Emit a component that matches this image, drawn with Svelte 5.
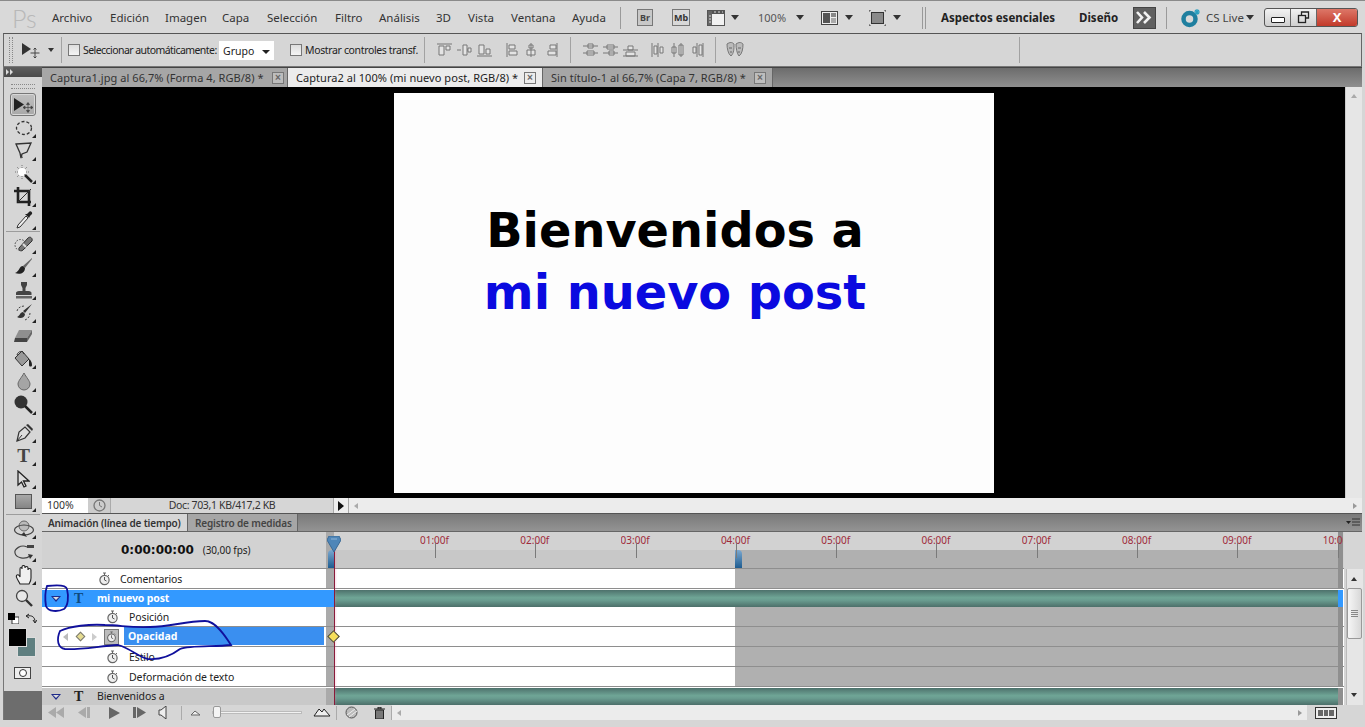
<script>
  const menus = [
    ['Archivo', 58], ['Edición', 55], ['Imagen', 57], ['Capa', 45], ['Selección', 68],
    ['Filtro', 44], ['Análisis', 57], ['3D', 32], ['Vista', 43], ['Ventana', 61], ['Ayuda', 48]
  ];
  const ticks = ['01:00f','02:00f','03:00f','04:00f','05:00f','06:00f','07:00f','08:00f','09:00f','10:00f'];
  const alignA = [
    'M0 1h15M2 3h5v9H2zM9 3h4v4H9z', 'M0 7h4M6 2h4v10H6zM11 5h3v4h-3zM10 7h1', 'M0 13h15M2 2h5v9H2zM9 6h4v5H9z'
  ];
  const alignB = [
    'M1 0v14M3 2h6v4H3zM3 8h8v4H3z', 'M5 0v14M3 2h4v3H3zM1 7h8v5H1z', 'M11 0v14M4 2h6v4H4zM2 8h8v4H2z'
  ];
  const alignC = [
    'M0 3h15M0 10h15M5 1h5v4H5zM4 8h7v4H4z', 'M0 4h15M0 10h15M4 2h7v4H4zM6 8h5v4H6z', 'M0 13h15M0 7h15M5 3h5v4H5zM3 9h9v4H3z'
  ];
  const alignD = [
    'M1 0v14M7 0v14M3 3h3v8H3zM9 4h3v6H9z', 'M3 0v14M10 0v14M1 4h4v6H1zM8 2h4v10H8z', 'M6 0v14M12 0v14M2 4h3v6H2zM8 2h3v10H8z'
  ];
</script>

{#snippet down(cls = '')}
  <span class="tri {cls}"></span>
{/snippet}

{#snippet watch()}
  <svg class="watch" width="13" height="14" viewBox="0 0 13 14"><path d="M5 1h3M6.500 1v2M10 3l1 1" stroke="#666" fill="none"/><circle cx="6.500" cy="8" r="4.600" fill="#eee" stroke="#666" stroke-width="1.200"/><path d="M6.500 8V5M6.500 8l2 1" stroke="#555" fill="none"/></svg>
{/snippet}

{#snippet layerT(dark)}
  <span class="layer-t" class:dark>T</span>
{/snippet}

<div class="app">
  <header class="title">
    <span class="ps">Ps</span>
    <nav class="menus">
      {#each menus as [m, w]}
        <span class="menu" style:width="{w}px">{m}</span>
      {/each}
    </nav>
    <span class="vsep"></span>
    <span class="badge br">Br</span>
    <span class="badge mb">Mb</span>
    <svg class="ic-film" width="18" height="16" viewBox="0 0 18 16"><rect x="0.500" y="0.500" width="17" height="15" fill="#f2f2f2" stroke="#555"/><rect x="1" y="1" width="16" height="3" fill="#555"/><rect x="1" y="1" width="4" height="14" fill="#666"/><path d="M2 6h2M2 9h2M2 12h2M7 2h2M11 2h2M15 2h1" stroke="#ddd"/></svg>
    {@render down('t1')}
    <span class="zoom">100%</span>
    {@render down('t2')}
    <svg class="ic-arr" width="17" height="14" viewBox="0 0 17 14"><rect x="0.500" y="0.500" width="16" height="13" fill="#eee" stroke="#444"/><rect x="2" y="2" width="7" height="10" fill="#555"/><rect x="10" y="2" width="5" height="4" fill="#888"/><rect x="10" y="7" width="5" height="5" fill="#aaa"/></svg>
    {@render down('t3')}
    <svg class="ic-scr" width="17" height="16" viewBox="0 0 17 16"><path d="M0 2V0h2M15 0h2v2M17 14v2h-2M2 16H0v-2" stroke="#444" fill="none"/><rect x="2.500" y="2.500" width="12" height="11" fill="#8a8a8a" stroke="#333"/></svg>
    {@render down('t4')}
    <span class="dsep"></span>
    <b class="ws ws1">Aspectos esenciales</b>
    <b class="ws ws2">Diseño</b>
    <span class="more"><svg width="17" height="13" viewBox="0 0 17 13"><path d="M1 1l5 5.500-5 5.500M8 1l5.500 5.500L8 12" fill="none" stroke="#f2f2f2" stroke-width="2.600"/></svg></span>
    <span class="vsep s2"></span>
    <svg class="cs" width="20" height="20" viewBox="0 0 20 20"><circle cx="8.500" cy="11" r="6" fill="none" stroke="#1f7f9f" stroke-width="4.500"/><path d="M16 1v6M13 4h6M14 2l4 4M18 2l-4 4" stroke="#2aa0c0" stroke-width="1.200"/></svg>
    <span class="cslive">CS Live</span>
    {@render down('t5')}
    <div class="winbtns">
      <span class="wb wmin"><i></i></span>
      <span class="wb wres"><svg width="13" height="13" viewBox="0 0 13 13"><path d="M4.500 4V1h7v6H9" fill="none" stroke="#222" stroke-width="1.300"/><rect x="1.500" y="4.500" width="7" height="7" fill="none" stroke="#222" stroke-width="1.300"/></svg></span>
      <span class="wb wclose">X</span>
    </div>
  </header>

  <section class="options">
    <span class="grip"></span>
    <svg class="op-move" width="18" height="17" viewBox="0 0 18 17"><path d="M0 1l9 6-9 6z" fill="#333"/><path d="M13 6v10M8.500 11H17.500M13 6l-1.500 1.500M13 6l1.500 1.500M13 16l-1.500-1.500M13 16l1.500-1.500" stroke="#444" fill="none"/></svg>
    {@render down('o1')}
    <span class="osep a"></span>
    <span class="chk c1"></span>
    <span class="olabel l1">Seleccionar automáticamente:</span>
    <span class="select">Grupo<i></i></span>
    <span class="chk c2"></span>
    <span class="olabel l2">Mostrar controles transf.</span>
    <span class="osep b"></span>
    <div class="aligns g1">
      {#each alignA as d}<svg width="15" height="14" viewBox="0 0 15 14"><path {d} fill="#e4e4e4" stroke="#777"/></svg>{/each}
    </div>
    <div class="aligns g2">
      {#each alignB as d}<svg width="12" height="14" viewBox="0 0 12 14"><path {d} fill="#e4e4e4" stroke="#777"/></svg>{/each}
    </div>
    <span class="osep c"></span>
    <div class="aligns g3">
      {#each alignC as d}<svg width="15" height="14" viewBox="0 0 15 14"><path {d} fill="#e4e4e4" stroke="#777"/></svg>{/each}
    </div>
    <div class="aligns g4">
      {#each alignD as d}<svg width="14" height="14" viewBox="0 0 14 14"><path {d} fill="#e4e4e4" stroke="#777"/></svg>{/each}
    </div>
    <span class="osep d"></span>
    <svg class="masks" width="18" height="16" viewBox="0 0 18 16"><path d="M1 2c3-2 5-2 7 0 0 5 0 9-3 12C2 12 1 6 1 2zM10 2c3-2 5-2 7 0 0 5-1 10-4 12-2-2-3-8-3-12z" fill="#bbb" stroke="#777"/><path d="M3 6h3M12 6h3M4 10h2M12 10h2" stroke="#666"/></svg>
    <span class="osep e"></span>
  </section>

  <div class="work">
    <aside class="tools">
      <div class="tb-head"><svg width="8" height="6" viewBox="0 0 8 6"><path d="M0 0l3 3-3 3zM4 0l3 3-3 3z" fill="#ddd"/></svg></div>
      <div class="tb-grip"></div>

      <div class="tool active"><svg width="20" height="16" viewBox="0 0 20 16"><path d="M1 1l10 6.500-10 6.500z" fill="#222"/><path d="M15 6v9M10.500 10.500h9M15 5.500l-1.500 2h3zM15 15.500l-1.500-2h3zM10 10.500l2-1.500v3zM20 10.500l-2-1.500v3z" stroke="#444" stroke-width=".7" fill="#444"/></svg></div>
      <div class="tool m"><svg width="18" height="16" viewBox="0 0 18 16"><ellipse cx="9" cy="8" rx="7.500" ry="6.500" fill="none" stroke="#333" stroke-width="1.300" stroke-dasharray="3 2"/></svg></div>
      <div class="tool m"><svg width="18" height="18" viewBox="0 0 18 18"><path d="M1 2l15-1-4 9-5 2-1 4-1-5z" fill="none" stroke="#333" stroke-width="1.300"/><path d="M6 12c-1 2 1 4 2 3" fill="none" stroke="#333"/></svg></div>
      <div class="tool m"><svg width="20" height="20" viewBox="0 0 20 20"><circle cx="8" cy="8" r="4" fill="#fff"/><path d="M8 1v3M8 12v3M1 8h3M12 8h3M3 3l2 2M11 11l-1-1M13 3l-2 2M3 13l2-2" stroke="#777" stroke-dasharray="1 1"/><path d="M11 11l7 7" stroke="#222" stroke-width="2.500"/></svg></div>
      <div class="tool m"><svg width="19" height="19" viewBox="0 0 19 19"><path d="M4 0v15h13M0 4h15v15" fill="none" stroke="#222" stroke-width="2.600"/><path d="M4 15L17 2" stroke="#333"/></svg></div>
      <div class="tool m"><svg width="18" height="19" viewBox="0 0 18 19"><path d="M11 6L3 15l-1 3 3-1 8-9z" fill="#eee" stroke="#333"/><path d="M10 4l4 4 1-2 2-2c1-2-2-4-3-2l-2 2z" fill="#222"/></svg></div>
      <div class="tsep"></div>

      <div class="tool m"><svg width="20" height="18" viewBox="0 0 20 18"><circle cx="6.500" cy="10" r="5.500" fill="none" stroke="#444" stroke-dasharray="1.500 1.500"/><path d="M5 13L14 3c2-2 5 0 4 3l-9 9c-2 2-5 0-4-2z" fill="#777" stroke="#333"/><path d="M9 9l3 3" stroke="#ddd" stroke-width="2"/></svg></div>
      <div class="tool m"><svg width="19" height="17" viewBox="0 0 19 17"><path d="M18 0L9 8l2 2 7-9z" fill="#666"/><path d="M9 8c-4 0-3 5-8 7 5 2 10 0 10-5z" fill="#222"/></svg></div>
      <div class="tool m"><svg width="18" height="18" viewBox="0 0 18 18"><path d="M6 1h6v3l-1.500 3v3h3c2 0 3 1 3 2v2H1v-2c0-1 1-2 3-2h3.500V7L6 4z" fill="#444"/><rect x="1" y="15" width="16" height="2.500" fill="#666"/></svg></div>
      <div class="tool m"><svg width="18" height="17" viewBox="0 0 18 17"><path d="M17 0L8 7l2 2zM8 8c-3 0-3 4-6 5 3 2 8 1 8-3z" fill="#333"/><path d="M2 7c1-4 5-5 8-5M15 9c0 3-2 6-5 7" stroke="#444" fill="none" stroke-dasharray="2 1.500"/></svg></div>
      <div class="tool"><svg width="19" height="14" viewBox="0 0 19 14"><path d="M5 1h13L13 9H1z" fill="#8f8f8f"/><path d="M1 9h12v4H0z" fill="#444"/><path d="M18 1l-5 8v4l5-8z" fill="#666"/></svg></div>
      <div class="tool m"><svg width="19" height="20" viewBox="0 0 19 20"><path d="M8 2L1 9l7 8 7-7z" fill="#999" stroke="#333"/><path d="M3 6c1-4 6-5 7-1" fill="none" stroke="#333"/><path d="M15 10c2 1 3 4 3 6s-3 2-3 0z" fill="#222"/></svg></div>
      <div class="tool m"><svg width="14" height="19" viewBox="0 0 14 19"><path d="M7 1c-2 4-6 8-6 11a6 6 0 0 0 12 0C13 9 9 5 7 1z" fill="#a5a5a5" stroke="#666"/></svg></div>
      <div class="tool m"><svg width="20" height="20" viewBox="0 0 20 20"><circle cx="7" cy="7" r="6.500" fill="#333"/><path d="M11 11l7 7" stroke="#222" stroke-width="2.500"/></svg></div>
      <div class="gap5"></div>

      <div class="tool m"><svg width="20" height="20" viewBox="0 0 20 20"><path d="M3 18l2-9 6-5 5 5-5 6z" fill="#ddd" stroke="#333" stroke-width="1.200"/><path d="M12 2l6 6 1-2-5-5z" fill="#333"/><path d="M3 18l5-6" stroke="#333"/></svg></div>
      <div class="tool m"><span class="tool-t">T</span></div>
      <div class="tool m"><svg width="13" height="18" viewBox="0 0 13 18"><path d="M1 1v14l3.500-3L7 17l2-1-2.500-5H12z" fill="#ddd" stroke="#222" stroke-width="1.300"/></svg></div>
      <div class="tool m"><span class="rect"></span></div>
      <div class="tsep s2"></div>

      <div class="tool m"><svg width="22" height="18" viewBox="0 0 22 18"><circle cx="11" cy="6" r="5" fill="#bbb" stroke="#666"/><ellipse cx="11" cy="10" rx="9.500" ry="5" fill="none" stroke="#444" stroke-width="1.200"/><path d="M8 15l6 2-3-5z" fill="#333"/></svg></div>
      <div class="tool m"><svg width="22" height="18" viewBox="0 0 22 18"><path d="M14 4c-6-3-13 2-12 6 1 5 10 7 15 3" fill="none" stroke="#444" stroke-width="1.200"/><rect x="14" y="2" width="7" height="3" fill="#444"/><path d="M15 11l5 1-3 4z" fill="#333"/></svg></div>
      <div class="tool m"><svg width="18" height="20" viewBox="0 0 18 20"><path d="M5 19C3 15 0 11 2 10c2-1 3 2 3 2V4c0-2 2-2 2 0V2c0-2 3-2 3 0v1c0-2 3-2 3 0v2c0-2 3-2 3 0v8c0 3-1 4-2 6z" fill="#f0f0f0" stroke="#222" stroke-width="1.100"/></svg></div>
      <div class="tool"><svg width="18" height="18" viewBox="0 0 18 18"><circle cx="7" cy="7" r="5.500" fill="#e8e8e8" stroke="#444" stroke-width="1.300"/><path d="M11 11l6 6" stroke="#333" stroke-width="2.400"/></svg></div>

      <div class="mini">
        <svg width="11" height="11" viewBox="0 0 11 11"><rect x="4" y="4" width="7" height="7" fill="#fff" stroke="#333"/><rect width="7" height="7" fill="#000"/></svg>
        <svg width="11" height="11" viewBox="0 0 11 11"><path d="M1 3c5-1 8 1 8 6M7 7l2 3 2-3M3 1L0 3l3 2" fill="none" stroke="#222"/></svg>
      </div>
      <div class="swatches"><span class="bg"></span><span class="fg"></span></div>
      <div class="qmask"><i></i></div>
      <div class="dark-fill"></div>
    </aside>

    <main class="right">
      <div class="tabs">
        <span class="tab t1">Captura1.jpg al 66,7% (Forma 4, RGB/8) *<em>×</em></span>
        <span class="tab on t2">Captura2 al 100% (mi nuevo post, RGB/8) *<em>×</em></span>
        <span class="tab t3">Sin título-1 al 66,7% (Capa 7, RGB/8) *<em>×</em></span>
      </div>

      <div class="canvas-row">
        <div class="canvas">
          <div class="doc">
            <div class="l">Bienvenidos a</div>
            <div class="l blue">mi nuevo post</div>
          </div>
        </div>
        <div class="cv-scroll"><span class="up"></span></div>
      </div>

      <div class="status">
        <span class="pct">100%</span>
        <span class="clock"><svg width="13" height="13" viewBox="0 0 13 13"><circle cx="6.500" cy="6.500" r="5.500" fill="none" stroke="#777" stroke-width="1.300"/><path d="M6.500 3v3.500L9 8" stroke="#777" fill="none"/></svg></span>
        <span class="doc-info">Doc: 703,1 KB/417,2 KB</span>
        <span class="st-arrow"><i></i></span>
        <div class="hscroll"><i class="la"></i><i class="ra"></i></div>
      </div>

      <div class="panel-tabs">
        <span class="ptab on">Animación (línea de tiempo)</span>
        <span class="ptab">Registro de medidas</span>
        <span class="pmenu"><svg width="14" height="9" viewBox="0 0 14 9"><path d="M0 3h5L2.500 6z" fill="#222"/><path d="M6 1h8M6 4h8M6 7h8" stroke="#333"/></svg></span>
      </div>

      <div class="timeline">
        <div class="tl-main">
          <div class="row hdr">
            <div class="cell-l timecode"><b>0:00:00:00</b><span>(30,00 fps)</span></div>
            <div class="gut"></div>
            <div class="ruler">
              <div class="rule-top">
                {#each ticks as t}<span class="tick"><em>{t}</em></span>{/each}
              </div>
              <div class="rule-sub"><span class="work-a"></span><span class="work-b"></span></div>
            </div>
            <div class="gut2"></div>
          </div>

          <div class="row">
            <div class="cell-l prop top-prop">{@render watch()}<span>Comentarios</span></div>
            <div class="gut"></div><div class="tr-w"></div><div class="tr-g"></div><div class="gut2"></div>
          </div>

          <div class="row layer sel">
            <div class="cell-l lay">
              <span class="twirl"></span>{@render layerT(true)}<b>mi nuevo post</b>
            </div>
            <div class="gut blue"></div>
            <div class="bar"></div>
            <div class="gut2 blue"></div>
          </div>

          <div class="row">
            <div class="cell-l prop">{@render watch()}<span>Posición</span></div>
            <div class="gut"></div><div class="tr-w"></div><div class="tr-g"></div><div class="gut2"></div>
          </div>

          <div class="row">
            <div class="cell-l opac">
              <span class="nav-l"></span>
              <span class="kf small"></span>
              <span class="nav-r"></span>
              <span class="wbox">{@render watch()}</span>
              <b>Opacidad</b>
            </div>
            <div class="gut"></div><div class="tr-w"></div><div class="tr-g"></div><div class="gut2"></div>
          </div>

          <div class="row">
            <div class="cell-l prop">{@render watch()}<span>Estilo</span></div>
            <div class="gut"></div><div class="tr-w"></div><div class="tr-g"></div><div class="gut2"></div>
          </div>

          <div class="row">
            <div class="cell-l prop">{@render watch()}<span>Deformación de texto</span></div>
            <div class="gut"></div><div class="tr-w"></div><div class="tr-g"></div><div class="gut2"></div>
          </div>

          <div class="row layer">
            <div class="cell-l lay gray">
              <span class="twirl"></span>{@render layerT(false)}<span>Bienvenidos a</span>
            </div>
            <div class="gut"></div>
            <div class="bar"></div>
            <div class="gut2"></div>
          </div>

          <span class="playhead"></span>
          <svg class="phead" width="14" height="16" viewBox="0 0 14 16"><path d="M2 0h10l2 4-7 12L0 4z" fill="#4f86b8" stroke="#3a6a96"/><path d="M4 3h6" stroke="#8db4d8"/></svg>
          <span class="kf key"></span>
        </div>
        <div class="vscroll">
          <i class="up"></i>
          <span class="thumb"><s></s><s></s><s></s><s></s></span>
          <i class="dn"></i>
        </div>
      </div>

      <div class="transport">
        <svg class="tp" width="18" height="11" viewBox="0 0 18 11"><path d="M9 0v11L1 5.500zM17 0v11L9 5.500z" fill="#aaa"/></svg>
        <svg class="tp a2" width="13" height="11" viewBox="0 0 13 11"><path d="M9 0v11L1 5.500z" fill="#aaa"/><rect x="10" width="3" height="11" fill="#aaa"/></svg>
        <svg class="tp a3" width="13" height="12" viewBox="0 0 13 12"><path d="M1 0v12l11-6z" fill="#666"/></svg>
        <svg class="tp a4" width="13" height="11" viewBox="0 0 13 11"><path d="M4 0v11l9-5.500z" fill="#666"/><rect width="3" height="11" fill="#666"/></svg>
        <svg class="tp a5" width="9" height="13" viewBox="0 0 9 13"><path d="M8 0v13L3 9H1V4h2z" fill="#eee" stroke="#444"/></svg>
        <span class="tsp s1"></span>
        <svg class="tp a6" width="9" height="6" viewBox="0 0 9 6"><path d="M0 5l4-4 5 4z" fill="#eee" stroke="#666"/></svg>
        <span class="slider"><b></b></span>
        <svg class="tp a7" width="18" height="9" viewBox="0 0 18 9"><path d="M1 8l5-7 3 3 2-3 6 7z" fill="#eee" stroke="#222"/></svg>
        <span class="tsp s2"></span>
        <svg class="tp a8" width="13" height="13" viewBox="0 0 13 13"><circle cx="6.500" cy="6.500" r="5.500" fill="#bbb" stroke="#555"/><path d="M2 9l8-6M4 11l8-6" stroke="#eee"/></svg>
        <svg class="tp a9" width="11" height="12" viewBox="0 0 11 12"><path d="M0 2h11M4 2V0h3v2M1.500 3h8v9h-8z" fill="#777" stroke="#222"/></svg>
        <span class="tsp s3"></span>
        <div class="thscroll"><i class="la"></i><i class="ra"></i></div>
        <span class="modebtn"><i></i><i></i><i></i></span>
      </div>

      <svg class="ink" width="240" height="80" viewBox="40 582 240 80" aria-hidden="true">
        <path d="M47 586C55 585 66 584 67 589 69 597 68 606 64 609 58 612 48 612 46 606 45 600 45 592 47 586Z"/>
        <path d="M60 631C70 626 90 624 105 625 120 625 130 628 150 627 170 627 185 621 205 621 216 621 226 637 231 645 215 647 190 645 180 649 172 655 160 660 148 659 140 658 130 648 118 645 100 646 80 650 65 649 58 648 56 640 60 631Z"/>
      </svg>
    </main>
  </div>
  <footer class="foot"></footer>
</div>

<style>
  :global(body) { margin: 0; background: #d6d6d6; }
  .app {
    position: relative;
    width: 1365px; height: 727px; overflow: hidden;
    display: flex; flex-direction: column;
    background: #d6d6d6; color: #222;
    font: 10.5px/1 "Noto Sans", "Open Sans", sans-serif;
  }
  /* title bar */
  .title {
    height: 33px; box-sizing: border-box; flex: none;
    display: flex; align-items: center;
    border-top: 1px solid #8a8a8a; background: #d9d9d9;
    padding-left: 12px; padding-top: 1px;
    font-size: 11.5px; color: #333;
  }
  .ps { width: 40px; font: 300 25px "Lato", sans-serif; color: #b8b8b8; }
  .menus { display: flex; }
  .menu { display: block; white-space: nowrap; }
  .vsep { width: 1px; height: 22px; background: #9a9a9a; }
  .vsep.s2 { margin-left: 10px; }
  .badge {
    box-sizing: border-box; border: 1px solid #777; background: #c8c8c8;
    font-size: 9px; font-weight: 700; color: #444; height: 17px; display: flex; align-items: center; justify-content: center;
  }
  .br { width: 16px; margin-left: 16px; }
  .mb { width: 18px; margin-left: 19px; color: #333; background: #d8d8d8; }
  .ic-film { margin-left: 17px; }
  .tri { width: 0; height: 0; border: 4px solid transparent; border-top: 5px solid #333; border-bottom: 0; }
  .tri.t1 { margin-left: 6px; }
  .zoom { margin-left: 19px; color: #555; width: 30px; font-size: 11px; }
  .tri.t2 { margin-left: 8px; }
  .ic-arr { margin-left: 17px; }
  .tri.t3 { margin-left: 7px; }
  .ic-scr { margin-left: 16px; }
  .tri.t4 { margin-left: 7px; }
  .dsep { width: 2px; height: 22px; border-left: 1px solid #999; border-right: 1px solid #999; margin-left: 21px; }
  .ws { color: #222; font-size: 11.5px; white-space: nowrap; }
  .ws1 { margin-left: 15px; width: 138px; }
  .ws2 { width: 54px; }
  .more { width: 23px; height: 22px; background: #606060; border: 1px solid #444; box-sizing: border-box; display: flex; align-items: center; justify-content: center; }
  .cs { margin-left: 14px; }
  .cslive { margin-left: 5px; width: 40px; white-space: nowrap; color: #444; font-size: 11.5px; }
  .winbtns {
    margin-left: 10px; width: 94px; height: 19px; box-sizing: border-box; display: flex;
    border: 1px solid #555; border-radius: 3px; overflow: hidden;
    background: linear-gradient(#f2f2f2, #cfcfcf);
  }
  .wb { display: flex; align-items: center; justify-content: center; border-right: 1px solid #666; height: 100%; }
  .wmin { width: 25px; }
  .wmin i { width: 12px; height: 4px; border: 1px solid #222; border-radius: 1px; background: #fff; margin-top: 4px; }
  .wres { width: 25px; }
  .wclose { flex: 1; border: 0; background: linear-gradient(#dd7768, #c23a2a); color: #fff; font-size: 13px; font-weight: 700; }

  /* options bar */
  .options {
    height: 34px; flex: none; box-sizing: border-box; display: flex; align-items: center;
    margin: 0 3px; background: #d6d6d6;
    border: 1px solid #666; border-top-color: #555; border-bottom-color: #777;
    color: #222; padding-left: 5px;
  }
  .grip { width: 2px; height: 26px; border-left: 1px dotted #888; border-right: 1px dotted #888; }
  .op-move { margin-left: 9px; }
  .tri.o1 { margin-left: 8px; border-width: 3px; border-top-width: 4px; border-bottom-width: 0; }
  .osep { width: 1px; height: 26px; background: #a2a2a2; }
  .osep.a { margin-left: 7px; }
  .chk { width: 10px; height: 10px; border: 1px solid #777; background: linear-gradient(#ddd, #f4f4f4); flex: none; box-sizing: content-box; }
  .c1 { margin-left: 6px; }
  .olabel { white-space: nowrap; letter-spacing: -0.36px; font-size: 10.5px; }
  .l1 { margin-left: 3px; width: 136px; letter-spacing: -0.56px; }
  .select {
    width: 55px; height: 19px; box-sizing: border-box; background: #fff; display: flex; align-items: center; padding: 2px 0 0 4px; position: relative; flex: none;
  }
  .select i { position: absolute; right: 4px; top: 9px; border: 4px solid transparent; border-top: 4px solid #222; border-bottom: 0; }
  .c2 { margin-left: 16px; }
  .l2 { margin-left: 3px; width: 119px; }
  .aligns { display: flex; gap: 5px; }
  .g1 { margin-left: 12px; }
  .g2 { margin-left: 14px; gap: 8px; }
  .osep.c { margin-left: 12px; }
  .g3 { margin-left: 12px; }
  .g4 { margin-left: 13px; gap: 6px; }
  .osep.d { margin-left: 10px; }
  .masks { margin-left: 10px; }
  .osep.e { margin-left: 275px; }

  /* workspace */
  .work { display: flex; flex: 1; min-height: 0; height: 653px; }
  .tools {
    width: 39px; margin-left: 3px; flex: none; display: flex; flex-direction: column;
    background: #d6d6d6; border-left: 1px solid #777; box-sizing: border-box;
  }
  .tb-head { height: 10px; flex: none; background: linear-gradient(#5e5e5e, #4a4a4a); padding: 2px 0 0 2px; box-sizing: border-box; display: flex; }
  .tb-grip { height: 16px; flex: none; position: relative; }
  .tb-grip::after { content: ''; position: absolute; left: 7px; right: 7px; top: 7px; height: 3px; border-top: 1px dotted #888; border-bottom: 1px dotted #888; }
  .tool { height: 23px; flex: none; display: flex; align-items: center; justify-content: center; position: relative; box-sizing: border-box; padding-left: 1px; }
  .tool.m::after { content: ''; position: absolute; right: 6px; bottom: 1px; width: 0; height: 0; border-left: 4px solid transparent; border-bottom: 4px solid #222; }
  .tool.active { background: linear-gradient(#bfbfbf, #a8a8a8); border: 1px solid #777; border-radius: 3px; margin: 0 6px; padding: 0; box-shadow: inset 0 0 0 1px #d8d8d8; }
  .tsep { height: 1px; background: #9c9c9c; flex: none; margin: 0 2px; }
  .tsep.s2 { margin-top: 1px; margin-bottom: 2px; }
  .gap5 { height: 5px; flex: none; }
  .tool-t { font: 700 19px "Liberation Serif", serif; color: #444; }
  .rect { width: 15px; height: 13px; background: linear-gradient(#a8a8a8, #858585); border: 1px solid #555; }
  .mini { display: flex; gap: 7px; padding: 4px 0 0 4px; height: 15px; flex: none; box-sizing: border-box; }
  .swatches { height: 39px; flex: none; position: relative; margin-top: 4px; }
  .swatches .fg { position: absolute; left: 4px; top: 0; width: 19px; height: 19px; background: #000; border: 1px solid #ddd; box-sizing: border-box; }
  .swatches .bg { position: absolute; left: 13px; top: 9px; width: 19px; height: 20px; background: #5f7f80; border: 1px solid #ddd; box-sizing: border-box; }
  .qmask { flex: none; margin: 0 0 0 10px; width: 17px; height: 12px; background: #eee; border: 1px solid #444; box-sizing: border-box; display: flex; align-items: center; justify-content: center; }
  .qmask i { width: 8px; height: 8px; border: 1px solid #333; border-radius: 50%; box-sizing: border-box; background: #fff; }
  .dark-fill { flex: 1; background: #6d6d6d; margin-top: 12px; }

  .right { flex: 1; min-width: 0; display: flex; flex-direction: column; margin-right: 3px; }
  .tabs {
    height: 20px; flex: none; display: flex; align-items: stretch; background: linear-gradient(#6c6c6c, #8f8f8f);
    font-size: 11px; color: #333; box-sizing: border-box; border-top: 1px solid #444;
  }
  .tab { display: flex; align-items: center; box-sizing: border-box; padding-left: 8px; background: #a6a6a6; border-right: 1px solid #666; white-space: nowrap; position: relative; letter-spacing: .05px; }
  .tab.t1 { width: 246px; }
  .tab.t2 { width: 255px; background: #ececec; color: #222; }
  .tab.t3 { width: 230px; }
  .tab em { position: absolute; right: 3px; top: 4px; width: 10px; height: 10px; border: 1px solid #777; font: 700 10px/10px "Liberation Sans", sans-serif; text-align: center; color: #666; background: #bdbdbd; }
  .tab.on em, .tab.t3 em { right: 6px; }
  .tab.on em { background: #ececec; }

  .canvas-row { height: 411px; flex: none; display: flex; }
  .canvas { flex: 1; background: #000; display: flex; align-items: center; justify-content: center; }
  .doc {
    width: 600px; height: 400px; background: #fdfdfd; box-sizing: border-box;
    padding: 107px 37px 0 0; text-align: center;
    font: 700 47.8px/62px "DejaVu Sans", sans-serif; color: #000;
  }
  .blue { color: #0a0ae0; }
  .cv-scroll { width: 17px; background: #e6e6e6; position: relative; border-left: 1px solid #ccc; box-sizing: border-box; }
  .cv-scroll .up { position: absolute; left: 5px; top: 7px; border: 3px solid transparent; border-bottom: 4px solid #aaa; border-top: 0; }

  .status { height: 16px; flex: none; display: flex; background: #d6d6d6; align-items: stretch; box-sizing: border-box; border-bottom: 1px solid #555; color: #333; }
  .pct { width: 46px; background: #fff; display: flex; align-items: center; padding-left: 5px; box-sizing: border-box; font-size: 10.5px; }
  .clock { width: 22px; display: flex; align-items: center; justify-content: center; border-right: 1px solid #aaa; background: #ccc; }
  .doc-info { width: 222px; display: flex; align-items: center; justify-content: center; letter-spacing: -0.35px; }
  .st-arrow { width: 14px; display: flex; align-items: center; justify-content: center; background: #eee; border-left: 1px solid #aaa; border-right: 1px solid #aaa; }
  .st-arrow i { border: 5px solid transparent; border-left: 6px solid #111; border-right: 0; }
  .hscroll, .thscroll { flex: 1; background: #ececec; position: relative; }
  .la, .ra { position: absolute; top: 5px; border: 3.500px solid transparent; }
  .la { left: 5px; border-right: 4px solid #aaa; border-left: 0; }
  .ra { right: 5px; border-left: 4px solid #999; border-right: 0; }

  .panel-tabs { height: 18px; flex: none; display: flex; align-items: stretch; background: linear-gradient(#7a7a7a, #939393); border-bottom: 1px solid #666; box-sizing: border-box; position: relative; font-weight: 600; font-size: 10px; }
  .ptab { display: flex; align-items: center; padding-left: 7px; width: 110px; box-sizing: border-box; background: #a6a6a6; color: #444; border-right: 1px solid #666; white-space: nowrap; letter-spacing: -0.15px; }
  .ptab.on { width: 146px; background: #d6d6d6; color: #333; padding-left: 6px; }
  .pmenu { position: absolute; right: 2px; top: 4px; line-height: 0; }

  .timeline { display: flex; height: 173px; flex: none; }
  .tl-main { width: 1302px; position: relative; flex: none; }
  .row {
    display: grid; grid-template-columns: 284px 8px 401px 603px 5px 1px;
    height: 20px; background: #fff; box-sizing: border-box; border-bottom: 1px solid #8e8e8e;
  }
  .row.hdr { height: 37px; background: #d2d2d2; }
  .row.layer { height: 18px; border-bottom: 0; border-top: 1px solid #fff; background: #fff; }
  .row.sel .cell-l { background: #3399ff; }
  .gut { background: #aaa; }
  .gut.blue, .gut2.blue { background: #3399ff; }
  .gut2 { background: #8f8f8f; }
  .tr-w { background: #fff; }
  .tr-g { background: #b0b0b0; }
  .bar { grid-column: span 2; background: linear-gradient(#4d716c, #6fa596 45%, #6a9d90 60%, #4c6f6a); }
  .timecode { display: flex; align-items: center; padding: 0 0 0 79px; box-sizing: border-box; gap: 9px; }
  .timecode b { font: 700 12px "DejaVu Sans", sans-serif; color: #111; }
  .timecode span { font-size: 10px; color: #222; letter-spacing: -0.1px; }
  .ruler { grid-column: span 2; display: flex; flex-direction: column; }
  .rule-top { height: 18px; flex: none; display: flex; background: #d2d2d2; padding-left: 101px; box-sizing: border-box; white-space: nowrap; width: 1004px; }
  .tick { flex: none; width: 100.3px; position: relative; }
  .tick:last-child { width: 0; }
  .tick em { position: absolute; left: -15px; top: 1px; width: 30px; overflow: hidden; font: 10px "Noto Sans", sans-serif; color: #a02a3a; }
  .tick:last-child em { width: 20px; }
  .tick::after { content: ''; position: absolute; left: 0; top: 11px; height: 15px; width: 1px; background: #7a7a7a; z-index: 1; }
  .rule-sub { flex: 1; display: flex; position: relative; background: #b0b0b0; }
  .rule-sub::before { content: ''; width: 401px; background: #c8c8c8; }
  .work-a, .work-b { position: absolute; top: 0; bottom: 0; width: 7px; background: linear-gradient(#7aa8d0, #1e5c90); }
  .work-a { left: -6px; border-radius: 4px 0 0 0; }
  .work-b { left: 401px; border-radius: 0 4px 0 0; }
  .cell-l { display: flex; align-items: center; white-space: nowrap; min-width: 0; }
  .prop { padding: 1px 0 0 64px; gap: 10px; color: #222; letter-spacing: -0.1px; box-sizing: border-box; }
  .top-prop { padding-left: 56px; gap: 9px; }
  .lay b { margin-left: 13px; color: #fff; font-size: 10.5px; letter-spacing: -0.15px; }
  .lay.gray { background: #c9c9c9; color: #222; }
  .lay.gray span:last-child { margin-left: 13px; letter-spacing: -0.1px; }
  .twirl { margin-left: 9px; width: 0; height: 0; border: 5.500px solid transparent; border-top: 6px solid #1d2a8a; border-bottom: 0; position: relative; }
  .twirl::after { content: ''; position: absolute; left: -3.500px; top: -5px; border: 3.500px solid transparent; border-top: 3.500px solid #ddd; border-bottom: 0; }
  .layer-t { font: 700 14px "Liberation Serif", serif; margin-left: 13px; color: #222; width: 10px; }
  .layer-t.dark { color: #0e4a80; }
  .opac { padding-left: 21px; }
  .opac b { flex: 1; align-self: stretch; margin: 0 2px 1px 0; background: #3a8ff0; color: #fff; display: flex; align-items: center; padding: 1px 0 0 4px; font-size: 10.5px; box-sizing: border-box; }
  .nav-l { border: 4.500px solid transparent; border-right: 5px solid #bbb; border-left: 0; }
  .nav-r { border: 4.500px solid transparent; border-left: 5px solid #ccc; border-right: 0; margin-left: 8px; }
  .kf { display: inline-block; transform: rotate(45deg); box-sizing: border-box; }
  .kf.small { width: 7px; height: 7px; background: #e6dc90; border: 1px solid #777; margin-left: 9px; }
  .wbox { margin-left: 7px; width: 15px; height: 16px; background: #bcbcbc; border: 1px solid #777; box-sizing: border-box; display: flex; align-items: center; justify-content: center; margin-right: 5px; flex: none; }
  .wbox .watch { width: 11px; height: 12px; }
  .playhead { position: absolute; left: 292px; top: 8px; bottom: 0; width: 1px; background: #8a1a3a; box-shadow: 1px 0 0 rgba(240,120,160,.18), 2px 0 0 rgba(240,120,160,.08); }
  .phead { position: absolute; left: 285px; top: 4px; }
  .key { position: absolute; left: 287px; top: 100px; width: 9px; height: 9px; background: #f6de5a; border: 1px solid #444; }
  .vscroll { width: 17px; margin-left: 2px; flex: none; background: #e6e6e6; position: relative; margin-top: 37px; border-left: 1px solid #bbb; box-sizing: border-box; }
  .vscroll .up, .vscroll .dn { position: absolute; left: 4px; border: 3.500px solid transparent; }
  .vscroll .up { top: 8px; border-bottom: 4px solid #333; border-top: 0; }
  .vscroll .dn { bottom: 8px; border-top: 4px solid #333; border-bottom: 0; }
  .thumb { position: absolute; left: 0; right: 1px; top: 19px; height: 51px; background: linear-gradient(90deg, #f6f6f6, #d8d8d8); border: 1px solid #999; border-radius: 2px; box-sizing: border-box; display: flex; flex-direction: column; align-items: center; justify-content: center; gap: 1px; }
  .thumb s { display: block; width: 7px; height: 1px; background: #888; }

  .transport { height: 15px; flex: none; display: flex; align-items: center; background: #d6d6d6; border-bottom: 1px solid #666; box-sizing: content-box; }
  .tp { flex: none; }
  .tp:first-child { margin-left: 5px; }
  .a2 { margin-left: 12px; }
  .a3 { margin-left: 18px; }
  .a4 { margin-left: 12px; }
  .a5 { margin-left: 12px; }
  .tsp { width: 1px; height: 14px; background: #aaa; flex: none; }
  .tsp.s1 { margin-left: 14px; }
  .a6 { margin-left: 9px; }
  .slider { width: 90px; margin-left: 12px; height: 3px; background: #f2f2f2; border: 1px solid #bbb; box-sizing: border-box; position: relative; flex: none; }
  .slider b { position: absolute; left: 0; top: -6px; width: 8px; height: 12px; background: #f4f4f4; border: 1px solid #999; border-radius: 2px; box-sizing: border-box; }
  .a7 { margin-left: 11px; }
  .tsp.s2 { margin-left: 5px; }
  .a8 { margin-left: 8px; }
  .a9 { margin-left: 16px; }
  .tsp.s3 { margin-left: 6px; }
  .thscroll { align-self: stretch; }
  .modebtn { flex: none; width: 22px; height: 12px; background: #eee; border: 1px solid #333; box-sizing: border-box; display: flex; gap: 1px; padding: 2px; margin: 0 25px 0 8px; }
  .modebtn i { flex: 1; background: #666; }

  .foot { height: 7px; flex: none; background: #d6d6d6; }

  .ink { position: absolute; left: 40px; top: 582px; pointer-events: none; }
  .ink path { fill: none; stroke: #10109c; stroke-width: 1.800; stroke-linecap: round; }
</style>
